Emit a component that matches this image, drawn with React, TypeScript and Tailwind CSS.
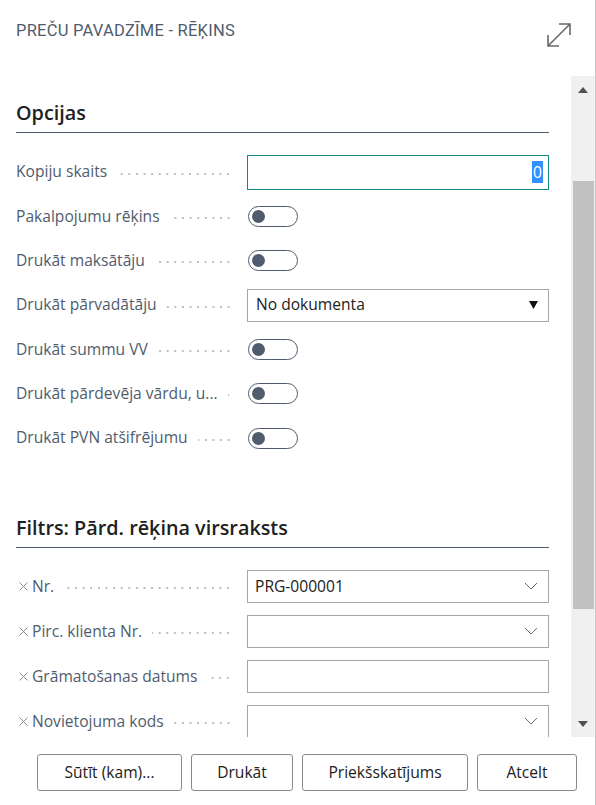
import React from "react";

const dots =
  "flex-1 h-[4px] ml-[10px] mt-[3px] bg-[radial-gradient(circle,_#bdbdbd_0.75px,_transparent_1.1px)] bg-[length:7.6px_4px] bg-repeat-x bg-[position:right_center]";

function Label({ text, x }: { text: string; x?: boolean }) {
  return (
    <div className="w-[231px] pr-[15px] flex items-center min-w-0">
      {x && (
        <svg width="9" height="9" viewBox="0 0 9 9" className="ml-[3px] mr-[4px] mt-[1px] shrink-0">
          <path d="M0.5 0.5 L8.5 8.5 M8.5 0.5 L0.5 8.5" stroke="#8a8a8a" strokeWidth="1" />
        </svg>
      )}
      <span className="text-[#505c6d] text-[15.6px] whitespace-nowrap">{text}</span>
      <span className={dots} />
    </div>
  );
}

function Toggle() {
  return (
    <div className="w-[50px] h-[21px] border border-[#505c6d] rounded-full flex items-center ml-[1px]">
      <div className="w-[13px] h-[13px] rounded-full bg-[#505c6d] ml-[3px]" />
    </div>
  );
}

function Chevron() {
  return (
    <svg width="14" height="8" viewBox="0 0 14 8" className="mr-[10px]">
      <path d="M1 1 L7 7 L13 1" fill="none" stroke="#6b6b6b" strokeWidth="1" />
    </svg>
  );
}

function OptRow({ label, children }: { label: string; children: React.ReactNode }) {
  return (
    <div className="h-[44.33px] flex items-center">
      <Label text={label} />
      <div className="flex-1 flex items-center">{children}</div>
    </div>
  );
}

function FilterRow({ label, value, chevron }: { label: string; value?: string; chevron?: boolean }) {
  return (
    <div className="h-[45px] flex items-center">
      <Label text={label} x />
      <div className="flex-1 h-[33px] border border-[#a6a6a6] flex items-center justify-between pl-[7px]">
        <span className="text-[15.6px] text-[#212121]">{value ?? ""}</span>
        {chevron && <Chevron />}
      </div>
    </div>
  );
}

export default function App() {
  return (
    <div className="w-[596px] h-[805px] bg-white border-r border-[#c8c8c8] flex flex-col font-['Open_Sans','Noto_Sans',sans-serif] overflow-hidden">
      {/* header */}
      <div className="h-[76px] flex justify-between items-start pl-4 pr-[23px] pt-[21px]">
        <div className="font-['Roboto',sans-serif] text-[16.5px] leading-[20px] text-[#505c6d] tracking-[0.25px]">
          PREČU PAVADZĪME - RĒĶINS
        </div>
        <svg width="26" height="26" viewBox="0 0 26 26" className="mt-[1px]">
          <path d="M2 24 L24 2 M13 2 H24 V13 M2 13 V24 H13" fill="none" stroke="#6a6a6a" strokeWidth="1.6" />
        </svg>
      </div>

      {/* body */}
      <div className="h-[661px] flex">
        <div className="flex-1 overflow-hidden pl-4 pr-[22px] pt-[23px]">
          <div className="text-[19.8px] font-semibold leading-[28px] pb-[5px] border-b border-[#505c6d] text-[#212121]">
            Opcijas
          </div>
          <div className="mt-[17px]">
            <OptRow label="Kopiju skaits">
              <div className="w-full h-[35px] border-[1.5px] border-[#0f8a86] flex items-center justify-end pr-[5px]">
                <span className="bg-[#3390ff] text-white text-[15.6px] leading-[22px] px-[1px]">0</span>
              </div>
            </OptRow>
            <OptRow label="Pakalpojumu rēķins">
              <Toggle />
            </OptRow>
            <OptRow label="Drukāt maksātāju">
              <Toggle />
            </OptRow>
            <OptRow label="Drukāt pārvadātāju">
              <div className="w-full h-[33px] border border-[#a6a6a6] flex items-center justify-between pl-[8px]">
                <span className="text-[15.6px] text-[#212121]">No dokumenta</span>
                <svg width="9" height="8" viewBox="0 0 9 8" className="mr-[10px]">
                  <path d="M0 0 H9 L4.5 8 Z" fill="#111" />
                </svg>
              </div>
            </OptRow>
            <OptRow label="Drukāt summu VV">
              <Toggle />
            </OptRow>
            <OptRow label="Drukāt pārdevēja vārdu, u...">
              <Toggle />
            </OptRow>
            <OptRow label="Drukāt PVN atšifrējumu">
              <Toggle />
            </OptRow>
          </div>

          <div className="mt-[54px] text-[19.8px] font-semibold leading-[28px] pb-[5px] border-b border-[#505c6d] text-[#212121]">
            Filtrs: Pārd. rēķina virsraksts
          </div>
          <div className="mt-[15.5px]">
            <FilterRow label="Nr." value="PRG-000001" chevron />
            <FilterRow label="Pirc. klienta Nr." chevron />
            <FilterRow label="Grāmatošanas datums" />
            <FilterRow label="Novietojuma kods" chevron />
          </div>
        </div>

        {/* scrollbar */}
        <div className="w-[24px] bg-[#f0f0f0] flex flex-col">
          <div className="h-[27px] flex items-center justify-center">
            <svg width="10" height="6" viewBox="0 0 10 6">
              <path d="M0 6 L5 0 L10 6 Z" fill="#505050" />
            </svg>
          </div>
          <div className="mt-[78px] h-[428px] ml-[2px] w-[21px] bg-[#c1c1c1]" />
          <div className="mt-auto h-[27px] flex items-center justify-center">
            <svg width="10" height="6" viewBox="0 0 10 6">
              <path d="M0 0 L10 0 L5 6 Z" fill="#505050" />
            </svg>
          </div>
        </div>
      </div>

      {/* footer */}
      <div className="flex-1 flex justify-end items-start pt-[17px] pr-[18px] gap-[9px]">
        {[
          ["Sūtīt (kam)...", "w-[145px]"],
          ["Drukāt", "w-[102px]"],
          ["Priekšskatījums", "w-[166px]"],
          ["Atcelt", "w-[100px]"],
        ].map(([t, w]) => (
          <button
            key={t}
            className={`${w} h-[37px] border border-[#8a8a8a] rounded-[3px] bg-white text-[15.6px] text-[#212121]`}
          >
            {t}
          </button>
        ))}
      </div>
    </div>
  );
}
